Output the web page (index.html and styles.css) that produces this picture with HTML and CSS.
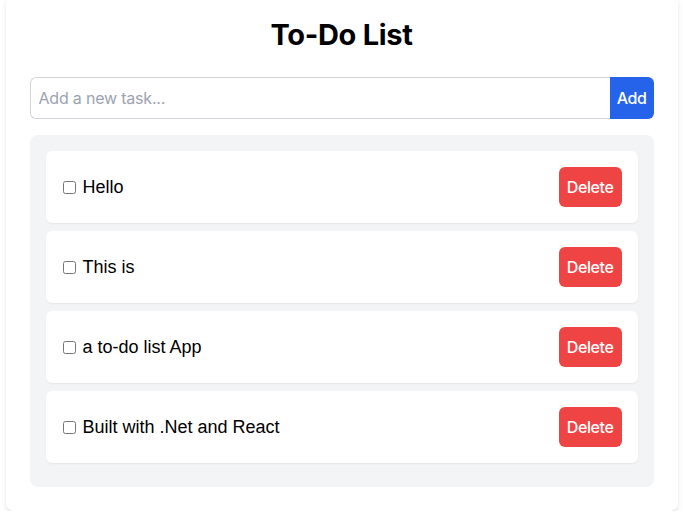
FILE: index.html
```html
<!DOCTYPE html>
<html lang="en">
<head>
<meta charset="utf-8">
<title>To-Do List</title>
<link rel="stylesheet" href="styles.css">
</head>
<body>
<div class="card">
  <h1 class="title">To-Do List</h1>
  <form class="add-form" onsubmit="return false">
    <input class="add-input" type="text" placeholder="Add a new task...">
    <button class="add-btn" type="submit">Add</button>
  </form>
  <div class="list">
    <div class="item">
      <label class="item-label"><input class="check" type="checkbox"><span>Hello</span></label>
      <button class="del-btn" type="button">Delete</button>
    </div>
    <div class="item">
      <label class="item-label"><input class="check" type="checkbox"><span>This is</span></label>
      <button class="del-btn" type="button">Delete</button>
    </div>
    <div class="item">
      <label class="item-label"><input class="check" type="checkbox"><span>a to-do list App</span></label>
      <button class="del-btn" type="button">Delete</button>
    </div>
    <div class="item">
      <label class="item-label"><input class="check" type="checkbox"><span>Built with .Net and React</span></label>
      <button class="del-btn" type="button">Delete</button>
    </div>
  </div>
</div>
</body>
</html>
```
FILE: styles.css
```css
* { box-sizing: border-box; }
html, body { margin: 0; padding: 0; }
body {
  background: #ffffff;
  font-family: Inter, "Liberation Sans", sans-serif;
  color: #000;
  overflow: hidden;
}
.card {
  width: 672px;
  margin: -7px auto 0;
  background: #fff;
  border-radius: 8px;
  padding: 24px;
  box-shadow: 0 4px 6px -1px rgba(0,0,0,0.1), 0 2px 4px -2px rgba(0,0,0,0.1);
}
.title {
  margin: 0 0 24px;
  font-size: 29px;
  line-height: 36px;
  font-weight: 700;
  text-align: center;
  letter-spacing: -0.3px;
}
.add-form {
  display: flex;
  margin: 0 0 16px;
}
.add-input {
  flex: 1;
  margin: 0;
  height: 42px;
  padding: 8px;
  border: 1px solid #d1d5db;
  border-right: none;
  border-radius: 6px 0 0 6px;
  font-family: Inter, sans-serif;
  font-size: 16px;
  line-height: 24px;
  letter-spacing: -0.2px;
  color: #111;
  outline: none;
}
.add-input::placeholder { color: #9ca3af; }
.add-btn {
  margin: 0;
  height: 42px;
  padding: 0 7px;
  border: none;
  border-radius: 0 6px 6px 0;
  background: #2563eb;
  color: #fff;
  font-family: Inter, sans-serif;
  font-size: 16px;
  font-weight: 500;
  letter-spacing: -0.4px;
}
.list {
  background: #f3f4f6;
  border-radius: 8px;
  padding: 16px;
  display: flex;
  flex-direction: column;
  gap: 8px;
}
.item {
  background: #fff;
  border-radius: 6px;
  padding: 16px;
  display: flex;
  align-items: center;
  justify-content: space-between;
  box-shadow: 0 1px 2px 0 rgba(0,0,0,0.06);
}
.list .item:last-child { margin-bottom: 8px; }
.item-label {
  display: flex;
  align-items: center;
  font-family: "Liberation Sans", Arial, sans-serif;
  font-size: 18px;
  color: #000;
}
.check {
  margin: 0 7px 0 1px;
  width: 13px;
  height: 13px;
}
.del-btn {
  margin: 0;
  height: 40px;
  padding: 0 8px;
  border: none;
  border-radius: 6px;
  background: #ef4444;
  color: #fff;
  font-family: Inter, sans-serif;
  font-size: 16px;
  font-weight: 500;
  letter-spacing: -0.4px;
}
```
